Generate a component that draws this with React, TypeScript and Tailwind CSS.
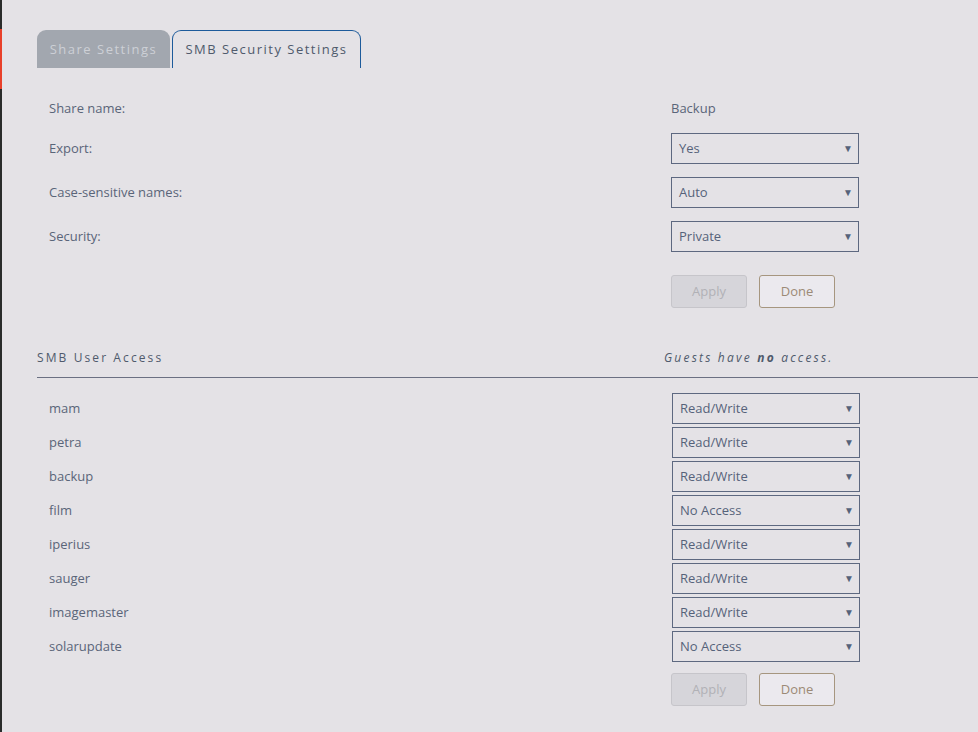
import React from 'react';

const users: Array<[string, string]> = [
  ['mam', 'Read/Write'],
  ['petra', 'Read/Write'],
  ['backup', 'Read/Write'],
  ['film', 'No Access'],
  ['iperius', 'Read/Write'],
  ['sauger', 'Read/Write'],
  ['imagemaster', 'Read/Write'],
  ['solarupdate', 'No Access'],
];

function Select({ value }: { value: string }) {
  return (
    <div className="flex h-[31px] w-[188px] items-center justify-between border border-[#5d6880] pl-[7px] pr-[5px] text-[13px] text-[#56627a]">
      <span>{value}</span>
      <span className="text-[10px] text-[#56627a]">▼</span>
    </div>
  );
}

function Buttons() {
  return (
    <div className="flex gap-[12px]">
      <button className="h-[33px] w-[76px] rounded-[3px] border border-[#c6c5ca] bg-[#d6d5da] text-[13px] text-[#b1b1b6]">
        Apply
      </button>
      <button className="h-[33px] w-[76px] rounded-[3px] border border-[#a6967f] bg-[#ebe9ee] text-[13px] text-[#9c8a76]">
        Done
      </button>
    </div>
  );
}

export default function App() {
  return (
    <div
      className="flex h-[732px] w-[978px] overflow-hidden bg-[#e4e2e6] text-[#5a6579]"
      style={{ fontFamily: '"Open Sans", "Noto Sans", sans-serif' }}
    >
      <div className="flex w-[2px] flex-col bg-[#2a2c2b]">
        <div className="mt-[29px] h-[60px] bg-[#e8402a]" />
      </div>

      <div className="flex-1 pl-[35px] pt-[30px]">
        {/* tabs */}
        <div className="flex gap-[2px]">
          <div className="flex h-[38px] w-[133px] items-center justify-center rounded-t-[9px] bg-[#a2a7af] pt-[1px] text-[13px] tracking-[1.5px] text-[#cdd0d6]">
            Share Settings
          </div>
          <div className="flex h-[38px] w-[189px] items-center justify-center rounded-t-[9px] border border-b-0 border-[#1d5b9b] text-[13px] tracking-[1.5px] text-[#4f5a6c]">
            SMB Security Settings
          </div>
        </div>

        {/* share settings */}
        <div className="grid grid-cols-[622px_188px] pl-[12px] text-[13px]">
          <div className="mt-[25px] flex h-[31px] items-center">Share name:</div>
          <div className="mt-[25px] flex h-[31px] items-center">Backup</div>

          <div className="mt-[9px] flex h-[31px] items-center">Export:</div>
          <div className="mt-[9px]">
            <Select value="Yes" />
          </div>

          <div className="mt-[13px] flex h-[31px] items-center">Case-sensitive names:</div>
          <div className="mt-[13px]">
            <Select value="Auto" />
          </div>

          <div className="mt-[13px] flex h-[31px] items-center">Security:</div>
          <div className="mt-[13px]">
            <Select value="Private" />
          </div>

          <div />
          <div className="mt-[23px]">
            <Buttons />
          </div>
        </div>

        {/* user access */}
        <div className="mt-[41px] flex border-b border-[#6b7082] pb-[10px] text-[12px]">
          <div className="w-[627px] tracking-[2.1px] text-[#4f5a6c]">SMB User Access</div>
          <div className="italic tracking-[2.2px] text-[#4f5a6c]">
            Guests have <b>no</b> access.
          </div>
        </div>

        <div className="mt-[15px] grid grid-cols-[623px_188px] gap-y-[3px] pl-[12px] text-[13px]">
          {users.map(([name, access]) => (
            <React.Fragment key={name}>
              <div className="flex h-[31px] items-center">{name}</div>
              <Select value={access} />
            </React.Fragment>
          ))}
        </div>
        <div className="ml-[634px] mt-[11px]">
          <Buttons />
        </div>
      </div>
    </div>
  );
}
